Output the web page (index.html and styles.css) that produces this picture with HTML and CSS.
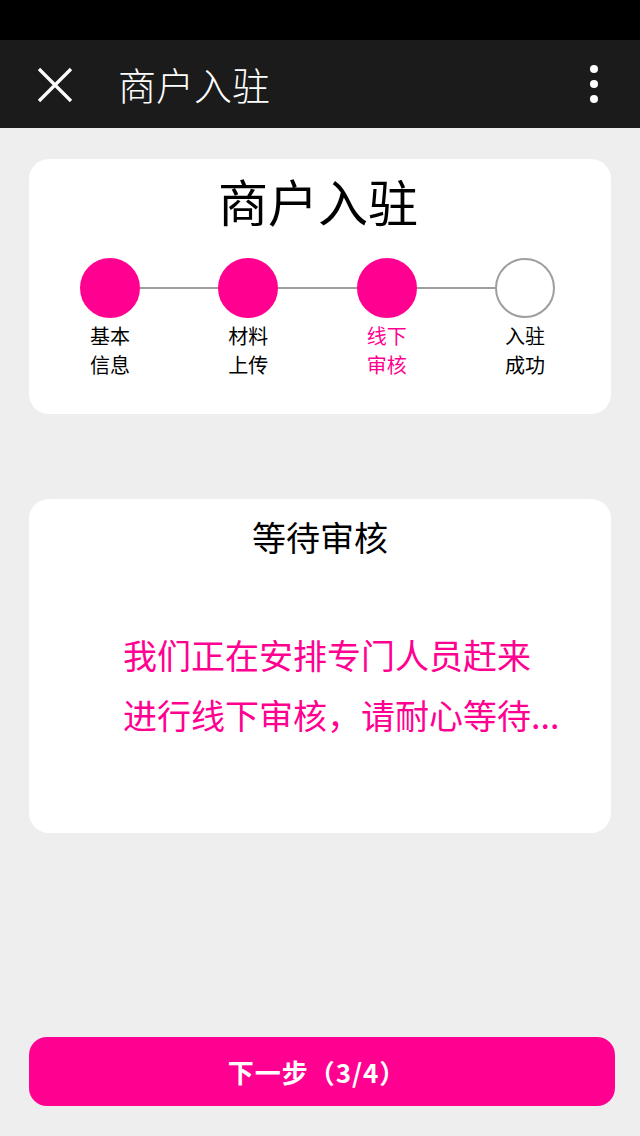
FILE: index.html
```html
<!DOCTYPE html>
<html lang="zh-CN">
<head>
<meta charset="utf-8">
<title>商户入驻</title>
<link rel="stylesheet" href="styles.css">
</head>
<body>
<div class="page">
  <div class="statusbar"></div>
  <header class="toolbar">
    <svg class="close" width="36" height="36" viewBox="0 0 36 36"><path d="M2 2 L34 34 M34 2 L2 34" stroke="#fff" stroke-width="3.2" fill="none"/></svg>
    <div class="tb-title">商户入驻</div>
    <div class="more"><span></span><span></span><span></span></div>
  </header>
  <main class="content">
    <section class="card steps-card">
      <h1 class="card-title">商户入驻</h1>
      <div class="steps">
        <div class="dot done"></div>
        <div class="line"></div>
        <div class="dot done"></div>
        <div class="line"></div>
        <div class="dot done"></div>
        <div class="line"></div>
        <div class="dot"></div>
        <div class="label"><span>基本</span><span>信息</span></div>
        <div class="gap"></div>
        <div class="label"><span>材料</span><span>上传</span></div>
        <div class="gap"></div>
        <div class="label active"><span>线下</span><span>审核</span></div>
        <div class="gap"></div>
        <div class="label"><span>入驻</span><span>成功</span></div>
      </div>
    </section>
    <section class="card wait-card">
      <h2 class="wait-title">等待审核</h2>
      <div class="wait-msg">
        <p class="msg-line">我们正在安排专门人员赶来</p>
        <p class="msg-line">进行线下审核，请耐心等待...</p>
      </div>
    </section>
    <button class="next-btn">下一步（3/4）</button>
  </main>
</div>
</body>
</html>
```

FILE: styles.css
```css
* { box-sizing: border-box; }
html, body { margin: 0; padding: 0; }
body {
  background: #eeeeee;
  font-family: "Noto Sans CJK SC", "Noto Sans", sans-serif;
}
.page {
  width: 640px;
  height: 1136px;
  display: flex;
  flex-direction: column;
}
.statusbar { height: 40px; background: #000; flex: none; }
.toolbar {
  height: 88px;
  flex: none;
  background: #1b1b1b;
  display: flex;
  align-items: center;
  padding-left: 37px;
  padding-right: 42px;
}
.close { flex: none; margin-top: 1px; }
.tb-title {
  color: #fff;
  font-size: 38px;
  font-weight: 300;
  margin-left: 45px;
  line-height: 1;
  flex: 1;
}
.more {
  display: flex;
  flex-direction: column;
  gap: 7px;
}
.more span {
  width: 8px; height: 8px; border-radius: 50%; background: #fff; display: block;
}
.content {
  flex: 1;
  display: flex;
  flex-direction: column;
  padding: 31px 25px 30px 29px;
}
.card {
  background: #fff;
  border-radius: 20px;
  width: 582px;
}
.steps-card { height: 255px; padding-top: 8px; }
.card-title {
  margin: 0 0 0 -4px;
  text-align: center;
  font-size: 50px;
  font-weight: 400;
  line-height: 66px;
  color: #000;
}
.steps {
  margin: 25px 0 0 51px;
  width: 475px;
  display: grid;
  grid-template-columns: 60px 1fr 60px 1fr 60px 1fr 60px;
  grid-template-rows: 60px auto;
}
.dot {
  width: 60px; height: 60px; border-radius: 50%;
  border: 2px solid #9e9e9e;
  background: #fff;
}
.dot.done { background: #ff0090; border-color: #ff0090; }
.line { height: 2px; background: #9e9e9e; align-self: center; }
.label {
  display: flex;
  flex-direction: column;
  align-items: center;
  font-size: 20px;
  color: #000;
  margin-top: 3px;
  white-space: nowrap;
  justify-self: center;
}
.label span { display: block; height: 29px; line-height: 29px; }
.label.active { color: #ff0090; }
.wait-card { margin-top: 85px; height: 334px; padding-top: 16px; }
.wait-title {
  margin: 0;
  text-align: center;
  font-size: 34px;
  font-weight: 400;
  line-height: 44px;
  color: #000;
}
.wait-msg {
  margin: 66px 0 0 94px;
  font-size: 34px;
  color: #ff0090;
  white-space: nowrap;
}
.msg-line { margin: 0; line-height: 60px; height: 60px; }
.next-btn {
  margin-top: auto;
  width: 586px;
  height: 69px;
  border: none;
  border-radius: 18px;
  background: #ff0090;
  color: #fff;
  font-family: "Noto Sans CJK SC", "Noto Sans", sans-serif;
  font-size: 26px;
  font-weight: 700;
  letter-spacing: 1px;
  padding: 0 10px 0 0;
}
```
